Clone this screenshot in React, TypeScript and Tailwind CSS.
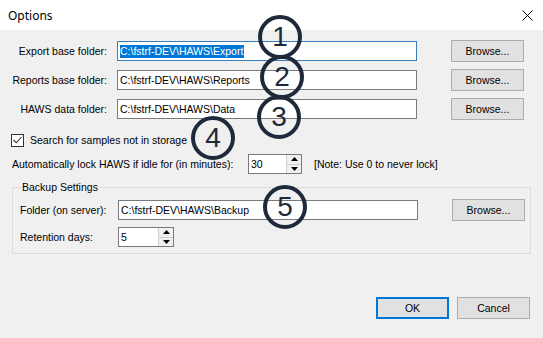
import React from 'react';

const font = { fontFamily: '"Liberation Sans", Arial, sans-serif' };

const Marker = ({ n, x, y }: { n: number; x: number; y: number }) => (
  <div
    className="absolute w-[44px] h-[44px] rounded-full border-[4px] border-[#1e2a3b] flex items-center justify-center text-[28px] leading-none text-[#1e2a3b]"
    style={{ left: x - 22, top: y - 22 }}
  >
    {n}
  </div>
);

const TextBox = ({ value, focused, selected }: { value: string; focused?: boolean; selected?: boolean }) => (
  <div
    className={`w-[300px] h-[20px] bg-white border flex items-center pl-[2px] ${focused ? 'border-[#3b7db8]' : 'border-[#7a7a7a]'}`}
  >
    <span className={selected ? 'bg-[#0078d7] text-white pr-[1px]' : ''}>{value}</span>
  </div>
);

const Button = ({ label, primary }: { label: string; primary?: boolean }) => (
  <div
    className={`w-[73px] h-[22px] bg-[#e1e1e1] flex items-center justify-center ${primary ? 'border-2 border-[#0078d7]' : 'border border-[#adadad]'}`}
  >
    {label}
  </div>
);

const Spinner = ({ value, width }: { value: string; width: string }) => (
  <div className={`${width} h-[20px] bg-white border border-[#7a7a7a] flex`}>
    <div className="flex-1 flex items-center pl-[2px]">{value}</div>
    <div className="w-[15px] flex flex-col bg-[#f0f0f0] border-l border-[#d0d0d0]">
      <div className="flex-1 flex items-center justify-center border-b border-[#d0d0d0]">
        <svg width="7" height="4" viewBox="0 0 7 4"><path d="M0 4 L3.5 0 L7 4 Z" fill="#000" /></svg>
      </div>
      <div className="flex-1 flex items-center justify-center">
        <svg width="7" height="4" viewBox="0 0 7 4"><path d="M0 0 L3.5 4 L7 0 Z" fill="#000" /></svg>
      </div>
    </div>
  </div>
);

const FolderRow = ({ label, value, focused }: { label: string; value: string; focused?: boolean }) => (
  <div className="flex items-center h-[22px]">
    <div className="w-[107px] text-right">{label}</div>
    <div className="ml-[10px]">
      <TextBox value={value} focused={focused} selected={focused} />
    </div>
    <div className="ml-[34px]">
      <Button label="Browse..." />
    </div>
  </div>
);

export default function App() {
  return (
    <div className="relative w-[543px] h-[338px] text-[10.5px] leading-[13px] text-black overflow-hidden" style={font}>
      <div className="h-[30px] bg-white flex items-center justify-between pl-[8px] pr-[10px]">
        <span className="text-[12px]" style={{ fontFamily: '"Noto Sans", "Open Sans", sans-serif' }}>Options</span>
        <svg width="11" height="11" viewBox="0 0 11 11">
          <path d="M0.5 0.5 L10.5 10.5 M10.5 0.5 L0.5 10.5" stroke="#000" strokeWidth="1" />
        </svg>
      </div>
      <div className="h-[308px] bg-[#f0f0f0] flex flex-col">
        <div className="mt-[10px] flex flex-col gap-[7px]">
          <FolderRow label="Export base folder:" value="C:\fstrf-DEV\HAWS\Export" focused />
          <FolderRow label="Reports base folder:" value="C:\fstrf-DEV\HAWS\Reports" />
          <FolderRow label="HAWS data folder:" value="C:\fstrf-DEV\HAWS\Data" />
        </div>

        <div className="mt-[12px] h-[16px] flex items-center pl-[11px]">
          <div className="w-[13px] h-[13px] border border-[#333] bg-white flex items-center justify-center">
            <svg width="9" height="8" viewBox="0 0 9 8">
              <path d="M0.5 4 L3.3 6.8 L8.5 1" stroke="#333" strokeWidth="1.1" fill="none" />
            </svg>
          </div>
          <span className="ml-[6px]">Search for samples not in storage</span>
        </div>

        <div className="mt-[6px] h-[20px] flex items-center pl-[12px]">
          <span className="w-[236px]">Automatically lock HAWS if idle for (in minutes):</span>
          <Spinner value="30" width="w-[54px]" />
          <span className="ml-[12px]">[Note: Use 0 to never lock]</span>
        </div>

        <fieldset className="mt-[7px] ml-[12px] w-[519px] border border-[#dcdcdc] pl-[7px] pb-[6px]">
          <legend className="ml-[1px] px-[1px]">Backup Settings</legend>
          <div className="mt-[5px] h-[22px] flex items-center">
            <span className="w-[98px]">Folder (on server):</span>
            <TextBox value="C:\fstrf-DEV\HAWS\Backup" />
            <div className="ml-[34px]">
              <Button label="Browse..." />
            </div>
          </div>
          <div className="mt-[6px] h-[20px] flex items-center">
            <span className="w-[98px]">Retention days:</span>
            <Spinner value="5" width="w-[56px]" />
          </div>
        </fieldset>

        <div className="mt-[43px] flex justify-end gap-[8px] pr-[13px]">
          <Button label="OK" primary />
          <Button label="Cancel" />
        </div>
      </div>

      <Marker n={1} x={280} y={37} />
      <Marker n={2} x={282} y={77} />
      <Marker n={3} x={279} y={117} />
      <Marker n={4} x={213} y={138} />
      <Marker n={5} x={285} y={207} />
    </div>
  );
}
